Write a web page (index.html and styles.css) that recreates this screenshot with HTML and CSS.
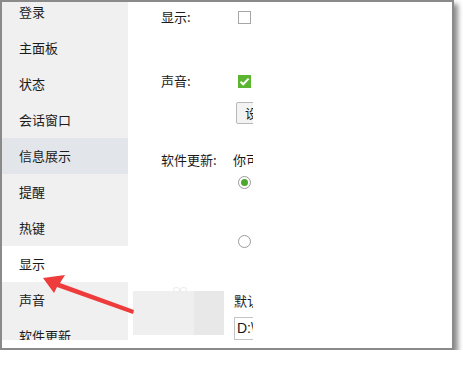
FILE: index.html
```html
<!DOCTYPE html>
<html lang="zh">
<head>
<meta charset="utf-8">
<link rel="stylesheet" href="styles.css">
</head>
<body>
<div class="window">
  <div class="sidebar">
    <ul class="nav">
      <li class="nav-item">登录</li>
      <li class="nav-item">主面板</li>
      <li class="nav-item">状态</li>
      <li class="nav-item">会话窗口</li>
      <li class="nav-item hover">信息展示</li>
      <li class="nav-item">提醒</li>
      <li class="nav-item">热键</li>
      <li class="nav-item selected">显示</li>
      <li class="nav-item">声音</li>
      <li class="nav-item">软件更新</li>
    </ul>
  </div>
  <div class="pane">
    <div class="row row-show">
      <span class="label">显示:</span>
      <span class="checkbox"></span>
    </div>
    <div class="row row-sound">
      <span class="label">声音:</span>
      <span class="checkbox checked"><svg viewBox="0 0 13 13" width="13" height="13"><path d="M2.5 6.8 L5.2 9.3 L10.6 3.6" fill="none" stroke="#fff" stroke-width="2"/></svg></span>
    </div>
    <div class="row row-btn">
      <span class="label"></span>
      <span class="button">设置</span>
    </div>
    <div class="row row-update">
      <span class="label">软件更新:</span>
      <span class="note">你可以选择</span>
    </div>
    <div class="row row-radio1">
      <span class="label"></span>
      <span class="radio on"></span>
    </div>
    <div class="row row-radio2">
      <span class="label"></span>
      <span class="radio"></span>
    </div>
    <div class="row row-default">
      <span class="label"></span>
      <span class="note">默认下载目录</span>
    </div>
    <div class="row row-input">
      <span class="label"></span>
      <span class="input">D:\Program</span>
    </div>
  </div>
  <div class="blur-box">
    <span class="dot"></span><span class="dot"></span>
  </div>
  <svg class="arrow" width="463" height="366" viewBox="0 0 463 366">
    <polygon points="43,278 65,275 60,283 134,310 133,314 57,287 54,293" fill="#ee3b3b"/>
  </svg>
</div>
</body>
</html>
```
FILE: styles.css
```css
* { box-sizing: border-box; }
html, body { margin: 0; padding: 0; background: #fff; }
body {
  font-family: "Noto Sans CJK SC", "Noto Sans", sans-serif;
  font-size: 13px;
  color: #1a1a1a;
}
.window {
  position: relative;
  width: 454px;
  height: 350px;
  border: 2px solid #8a8a8a;
  background: #fff;
  display: flex;
  align-items: flex-start;
  box-shadow: 4px 4px 5px rgba(0, 0, 0, 0.45);
}
.sidebar {
  width: 126px;
  height: 338px;
  background: #f0f0f0;
  overflow: hidden;
  flex: 0 0 126px;
}
.nav {
  list-style: none;
  margin: -8px 0 0 0;
  padding: 0;
}
.nav-item {
  height: 36px;
  display: flex;
  align-items: center;
  padding-left: 17px;
  line-height: 18px;
}
.nav-item.hover { background: #e2e6ea; }
.nav-item.selected { background: #fff; }

.pane {
  flex: 0 0 125px;
  width: 125px;
  height: 346px;
  overflow: hidden;
  padding-left: 33px;
}
.row {
  display: flex;
  align-items: center;
  white-space: nowrap;
}
.label {
  flex: 0 0 77px;
  width: 77px;
  line-height: 18px;
}
.row-show { margin-top: 6px; height: 18px; }
.row-sound { margin-top: 46px; height: 18px; }
.row-btn { margin-top: 12px; height: 22px; }
.row-btn .label { flex-basis: 75px; }
.row-update { margin-top: 27px; height: 18px; }
.row-update .label { flex-basis: 72px; }
.row-radio1 { margin-top: 7px; height: 13px; }
.row-radio2 { margin-top: 46px; height: 13px; }
.row-default { margin-top: 44px; height: 18px; }
.row-default .label { flex-basis: 73px; }
.row-input { margin-top: 7px; height: 23px; }
.row-input .label { flex-basis: 73px; }

.checkbox {
  width: 13px;
  height: 13px;
  border: 1px solid #a5a5a5;
  background: #fff;
  flex: 0 0 13px;
  display: block;
}
.checkbox.checked {
  background: #5cb531;
  border-color: #5cb531;
  position: relative;
}
.checkbox.checked svg { position: absolute; left: -1px; top: -1px; }
.button {
  height: 22px;
  line-height: 20px;
  padding: 0 8px;
  border: 1px solid #b8b8b8;
  background: #f3f3f3;
  border-radius: 2px;
}
.radio {
  width: 13px;
  height: 13px;
  border: 1px solid #9a9a9a;
  border-radius: 50%;
  background: #fff;
  flex: 0 0 13px;
  position: relative;
}
.radio.on::after {
  content: "";
  position: absolute;
  left: 2px;
  top: 2px;
  width: 7px;
  height: 7px;
  border-radius: 50%;
  background: #4fa72e;
}
.note { line-height: 18px; }
.input {
  height: 23px;
  line-height: 21px;
  border: 1px solid #c4c4c4;
  padding: 0 2px;
  font-family: "Liberation Sans", "Noto Sans", sans-serif;
  font-size: 14px;
}

.blur-box {
  position: absolute;
  left: 131px;
  top: 289px;
  width: 91px;
  height: 44px;
  background: linear-gradient(to right, #efefef 0 61px, #e8e8e8 61px);
}
.dot {
  position: absolute;
  top: -4px;
  width: 7px;
  height: 6px;
  border-radius: 50%;
  border: 1px solid #ececec;
}
.dot:first-child { left: 40px; }
.dot:last-child { left: 47px; }
.arrow {
  position: absolute;
  left: -2px;
  top: -2px;
  pointer-events: none;
}
```
